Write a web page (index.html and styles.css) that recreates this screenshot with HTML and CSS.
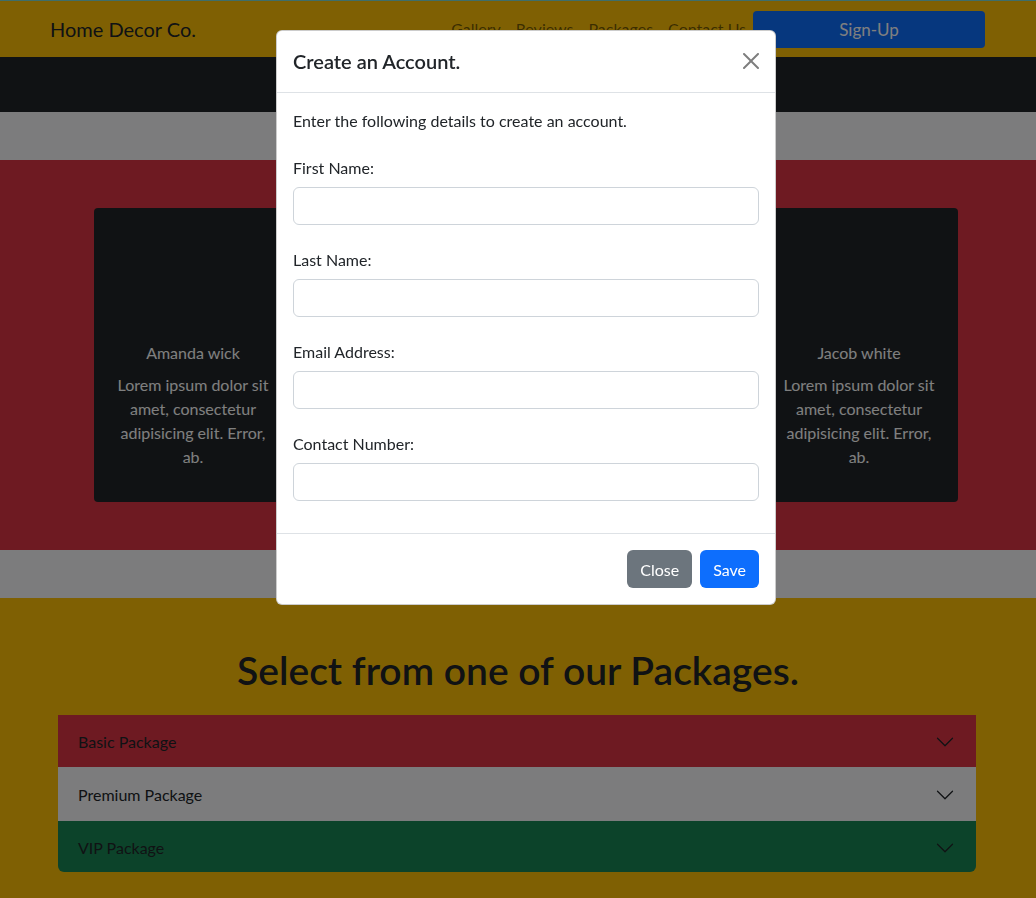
FILE: index.html
```html
<!DOCTYPE html>
<html lang="en">
<head>
<meta charset="utf-8">
<title>Home Decor Co.</title>
<link rel="stylesheet" href="styles.css">
</head>
<body>
<nav class="navbar">
  <div class="brand">Home Decor Co.</div>
  <div class="nav-right">
    <ul class="nav-links">
      <li>Gallery</li>
      <li>Reviews</li>
      <li>Packages</li>
      <li>Contact Us</li>
    </ul>
    <button class="btn-signup">Sign-Up</button>
  </div>
</nav>

<section class="band band-dark"></section>
<section class="band band-light"></section>

<section class="reviews">
  <div class="cards">
    <div class="card">
      <div class="card-img"></div>
      <div class="card-body">
        <h5 class="card-title">Amanda wick</h5>
        <p class="card-text">Lorem ipsum dolor sit<br>amet, consectetur<br>adipisicing elit. Error,<br>ab.</p>
      </div>
    </div>
    <div class="card">
      <div class="card-img"></div>
      <div class="card-body">
        <h5 class="card-title">John Doe</h5>
        <p class="card-text">Lorem ipsum dolor sit<br>amet, consectetur<br>adipisicing elit. Error,<br>ab.</p>
      </div>
    </div>
    <div class="card">
      <div class="card-img"></div>
      <div class="card-body">
        <h5 class="card-title">Jacob white</h5>
        <p class="card-text">Lorem ipsum dolor sit<br>amet, consectetur<br>adipisicing elit. Error,<br>ab.</p>
      </div>
    </div>
  </div>
</section>

<section class="band band-light"></section>

<section class="packages">
  <h2 class="packages-title">Select from one of our Packages.</h2>
  <div class="accordion">
    <div class="acc-item acc-red">
      <span>Basic Package</span>
      <svg class="chev" viewBox="0 0 16 16" width="20" height="20"><path fill="#212529" fill-rule="evenodd" d="M1.646 4.646a.5.5 0 0 1 .708 0L8 10.293l5.646-5.647a.5.5 0 0 1 .708.708l-6 6a.5.5 0 0 1-.708 0l-6-6a.5.5 0 0 1 0-.708z"/></svg>
    </div>
    <div class="acc-item acc-light">
      <span>Premium Package</span>
      <svg class="chev" viewBox="0 0 16 16" width="20" height="20"><path fill="#212529" fill-rule="evenodd" d="M1.646 4.646a.5.5 0 0 1 .708 0L8 10.293l5.646-5.647a.5.5 0 0 1 .708.708l-6 6a.5.5 0 0 1-.708 0l-6-6a.5.5 0 0 1 0-.708z"/></svg>
    </div>
    <div class="acc-item acc-green">
      <span>VIP Package</span>
      <svg class="chev" viewBox="0 0 16 16" width="20" height="20"><path fill="#212529" fill-rule="evenodd" d="M1.646 4.646a.5.5 0 0 1 .708 0L8 10.293l5.646-5.647a.5.5 0 0 1 .708.708l-6 6a.5.5 0 0 1-.708 0l-6-6a.5.5 0 0 1 0-.708z"/></svg>
    </div>
  </div>
</section>

<div class="backdrop"></div>

<div class="modal">
  <div class="modal-header">
    <h5 class="modal-title">Create an Account.</h5>
    <svg class="btn-close" viewBox="0 0 16 16" width="16" height="16"><path fill="#000" d="M.293.293a1 1 0 0 1 1.414 0L8 6.586 14.293.293a1 1 0 1 1 1.414 1.414L9.414 8l6.293 6.293a1 1 0 0 1-1.414 1.414L8 9.414l-6.293 6.293a1 1 0 0 1-1.414-1.414L6.586 8 .293 1.707a1 1 0 0 1 0-1.414z"/></svg>
  </div>
  <div class="modal-body">
    <p class="intro">Enter the following details to create an account.</p>
    <div class="form-group">
      <label class="form-label">First Name:</label>
      <input class="form-control" type="text">
    </div>
    <div class="form-group">
      <label class="form-label">Last Name:</label>
      <input class="form-control" type="text">
    </div>
    <div class="form-group">
      <label class="form-label">Email Address:</label>
      <input class="form-control" type="email">
    </div>
    <div class="form-group">
      <label class="form-label">Contact Number:</label>
      <input class="form-control" type="text">
    </div>
  </div>
  <div class="modal-footer">
    <button class="btn btn-secondary">Close</button>
    <button class="btn btn-primary">Save</button>
  </div>
</div>
</body>
</html>
```

FILE: styles.css
```css
* { box-sizing: border-box; }

html, body {
  margin: 0;
  padding: 0;
}

body {
  font-family: Lato, "Open Sans", sans-serif;
  font-size: 16px;
  line-height: 24px;
  color: #212529;
  background: #ffc107;
  overflow: hidden;
}

/* Navbar */
.navbar {
  height: 57px;
  border-top: 1px solid #7ddcd4;
  background: #ffc107;
  display: flex;
  align-items: center;
  justify-content: space-between;
  padding: 0 51px 0 50px;
}

.brand {
  font-size: 20px;
  line-height: 30px;
  color: #212529;
}

.nav-right {
  display: flex;
  align-items: center;
}

.nav-links {
  list-style: none;
  margin: 0;
  padding: 0;
  display: flex;
}

.nav-links li {
  padding: 0 7px 0 8px;
  color: rgba(0, 0, 0, 0.55);
}

.btn-signup {
  width: 232px;
  height: 37px;
  border: 0;
  border-radius: 4px;
  background: #0d6efd;
  color: #fff;
  font-family: inherit;
  font-size: 17px;
}

/* Bands */
.band-dark {
  height: 55px;
  background: #212529;
}

.band-light {
  height: 48px;
  background: #f8f9fa;
}

/* Reviews */
.reviews {
  background: #dc3545;
  padding: 48px 0 48px 16px;
}

.cards {
  width: 864px;
  margin: 0 auto;
  display: flex;
  justify-content: space-between;
}

.card {
  width: 198px;
  background: #212529;
  border-radius: 4px;
  color: #fff;
  text-align: center;
  padding-bottom: 1px;
}

.card-img {
  height: 117px;
}

.card-body {
  padding: 16px;
}

.card-title {
  margin: 0 0 8px;
  font-size: 16px;
  font-weight: 400;
  line-height: 24px;
}

.card-text {
  margin: 0 0 16px;
  white-space: nowrap;
}

/* Packages */
.packages {
  background: #ffc107;
  padding: 48px 0 48px;
}

.packages-title {
  margin: 0 0 21px;
  text-align: center;
  font-size: 39px;
  line-height: 48px;
  font-weight: 600;
  color: #212529;
}

.accordion {
  margin-left: 58px;
  width: 918px;
  border-radius: 0 0 6px 6px;
  overflow: hidden;
}

.acc-item {
  display: flex;
  align-items: center;
  justify-content: space-between;
  padding: 15px 21px 13px 20px;
  color: #212529;
}

.acc-red { background: #dc3545; }
.acc-light { background: #f8f9fa; padding-top: 16px; padding-bottom: 14px; }
.acc-green { background: #198754; padding-top: 15px; padding-bottom: 12px; }

/* Backdrop + modal */
.backdrop {
  position: fixed;
  inset: 0;
  background: rgba(0, 0, 0, 0.5);
}

.modal {
  position: fixed;
  left: 276px;
  top: 30px;
  width: 500px;
  background: #fff;
  border: 1px solid rgba(0, 0, 0, 0.2);
  border-radius: 6px;
}

.modal-header {
  height: 62px;
  padding: 0 16px;
  display: flex;
  align-items: center;
  justify-content: space-between;
  border-bottom: 1px solid #dee2e6;
}

.modal-title {
  margin: 0 0 2px;
  font-size: 20px;
  line-height: 24px;
  font-weight: 600;
  color: #212529;
}

.btn-close {
  opacity: 0.5;
  margin-bottom: 2px;
}

.modal-body {
  padding: 16px;
}

.intro {
  margin: 0 0 23px;
}

.form-group {
  margin-bottom: 23px;
}

.form-group:last-child {
  margin-bottom: 16px;
}

.form-label {
  display: block;
  margin-bottom: 7px;
}

.form-control {
  display: block;
  width: 100%;
  height: 38px;
  border: 1px solid #ced4da;
  border-radius: 6px;
  background: #fff;
  font-family: inherit;
  font-size: 16px;
}

.modal-footer {
  border-top: 1px solid #dee2e6;
  padding: 16px;
  display: flex;
  justify-content: flex-end;
  gap: 8px;
}

.btn {
  height: 38px;
  padding: 0 13px;
  border: 0;
  border-radius: 6px;
  color: #fff;
  font-family: inherit;
  font-size: 16px;
}

.btn-secondary { background: #6c757d; }
.btn-primary { background: #0d6efd; }
```
